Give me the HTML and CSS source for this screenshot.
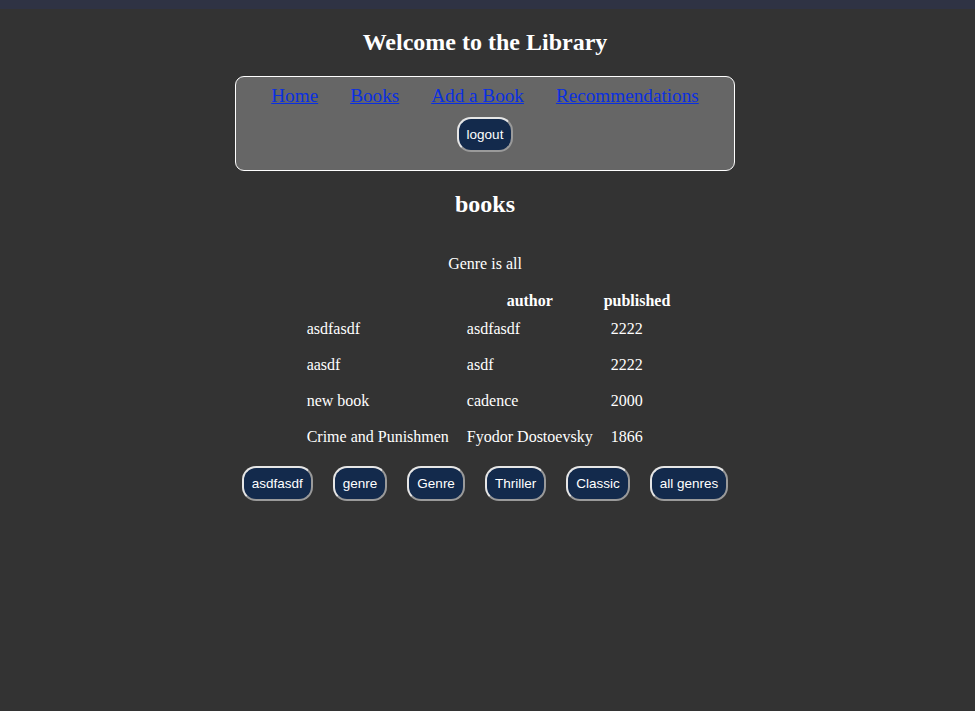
FILE: index.html
```html
<!DOCTYPE html>
<html>
<head>
<meta charset="utf-8">
<title>Library</title>
<link rel="stylesheet" href="styles.css">
</head>
<body>
<div class="topbar"></div>
<div class="page">
  <h2 class="title">Welcome to the Library</h2>
  <nav class="nav">
    <div class="links">
      <a href="#">Home</a>
      <a href="#">Books</a>
      <a href="#">Add a Book</a>
      <a href="#">Recommendations</a>
    </div>
    <button class="btn">logout</button>
  </nav>
  <h2 class="heading">books</h2>
  <p class="genre">Genre is all</p>
  <table class="books">
    <thead>
      <tr><th></th><th>author</th><th>published</th></tr>
    </thead>
    <tbody>
      <tr><td>asdfasdf</td><td>asdfasdf</td><td>2222</td></tr>
      <tr><td>aasdf</td><td>asdf</td><td>2222</td></tr>
      <tr><td>new book</td><td>cadence</td><td>2000</td></tr>
      <tr><td>Crime and Punishmen</td><td>Fyodor Dostoevsky</td><td>1866</td></tr>
    </tbody>
  </table>
  <div class="filters">
    <button class="btn">asdfasdf</button>
    <button class="btn">genre</button>
    <button class="btn">Genre</button>
    <button class="btn">Thriller</button>
    <button class="btn">Classic</button>
    <button class="btn">all genres</button>
  </div>
</div>
</body>
</html>
```
FILE: styles.css
```css
html, body {
  margin: 0;
  padding: 0;
  background: #333333;
  color: #ffffff;
  font-family: "Liberation Serif", "Times New Roman", serif;
  font-size: 16px;
}

.topbar {
  height: 9px;
  background: #2f3344;
}

.page {
  width: 970px;
  display: flex;
  flex-direction: column;
  align-items: center;
}

.title,
.heading {
  font-size: 24px;
  font-weight: bold;
  line-height: 27.6px;
}

.title {
  margin: 20px 0 19px;
}

.heading {
  margin: 20px 0 20px;
}

.nav {
  box-sizing: border-box;
  width: 500px;
  background: #666666;
  border: 1px solid #ffffff;
  border-radius: 9px;
  padding: 8px 0 18px;
  display: flex;
  flex-direction: column;
  align-items: center;
  gap: 10px;
}

.links {
  display: flex;
  gap: 32px;
  font-size: 19.2px;
  line-height: 22px;
}

.links a {
  color: #0a2fe0;
  text-decoration: underline;
}

.btn {
  font-family: "Liberation Sans", Arial, sans-serif;
  font-size: 13.5px;
  line-height: 15px;
  color: #ffffff;
  background: #132a4c;
  border: 2px solid;
  border-color: #e6e6e6 #9a9a9a #9a9a9a #e6e6e6;
  border-radius: 14px;
  padding: 8px 8px;
  cursor: pointer;
}

.genre {
  margin: 17px 0 16px;
  line-height: 18px;
}

.books {
  border-spacing: 2px;
}

.books th {
  padding: 1px 1px 0;
  font-weight: bold;
  text-align: center;
}

.books td {
  padding: 8px;
  text-align: left;
}

.filters {
  display: flex;
  gap: 20px;
  margin-top: 10px;
}
```
